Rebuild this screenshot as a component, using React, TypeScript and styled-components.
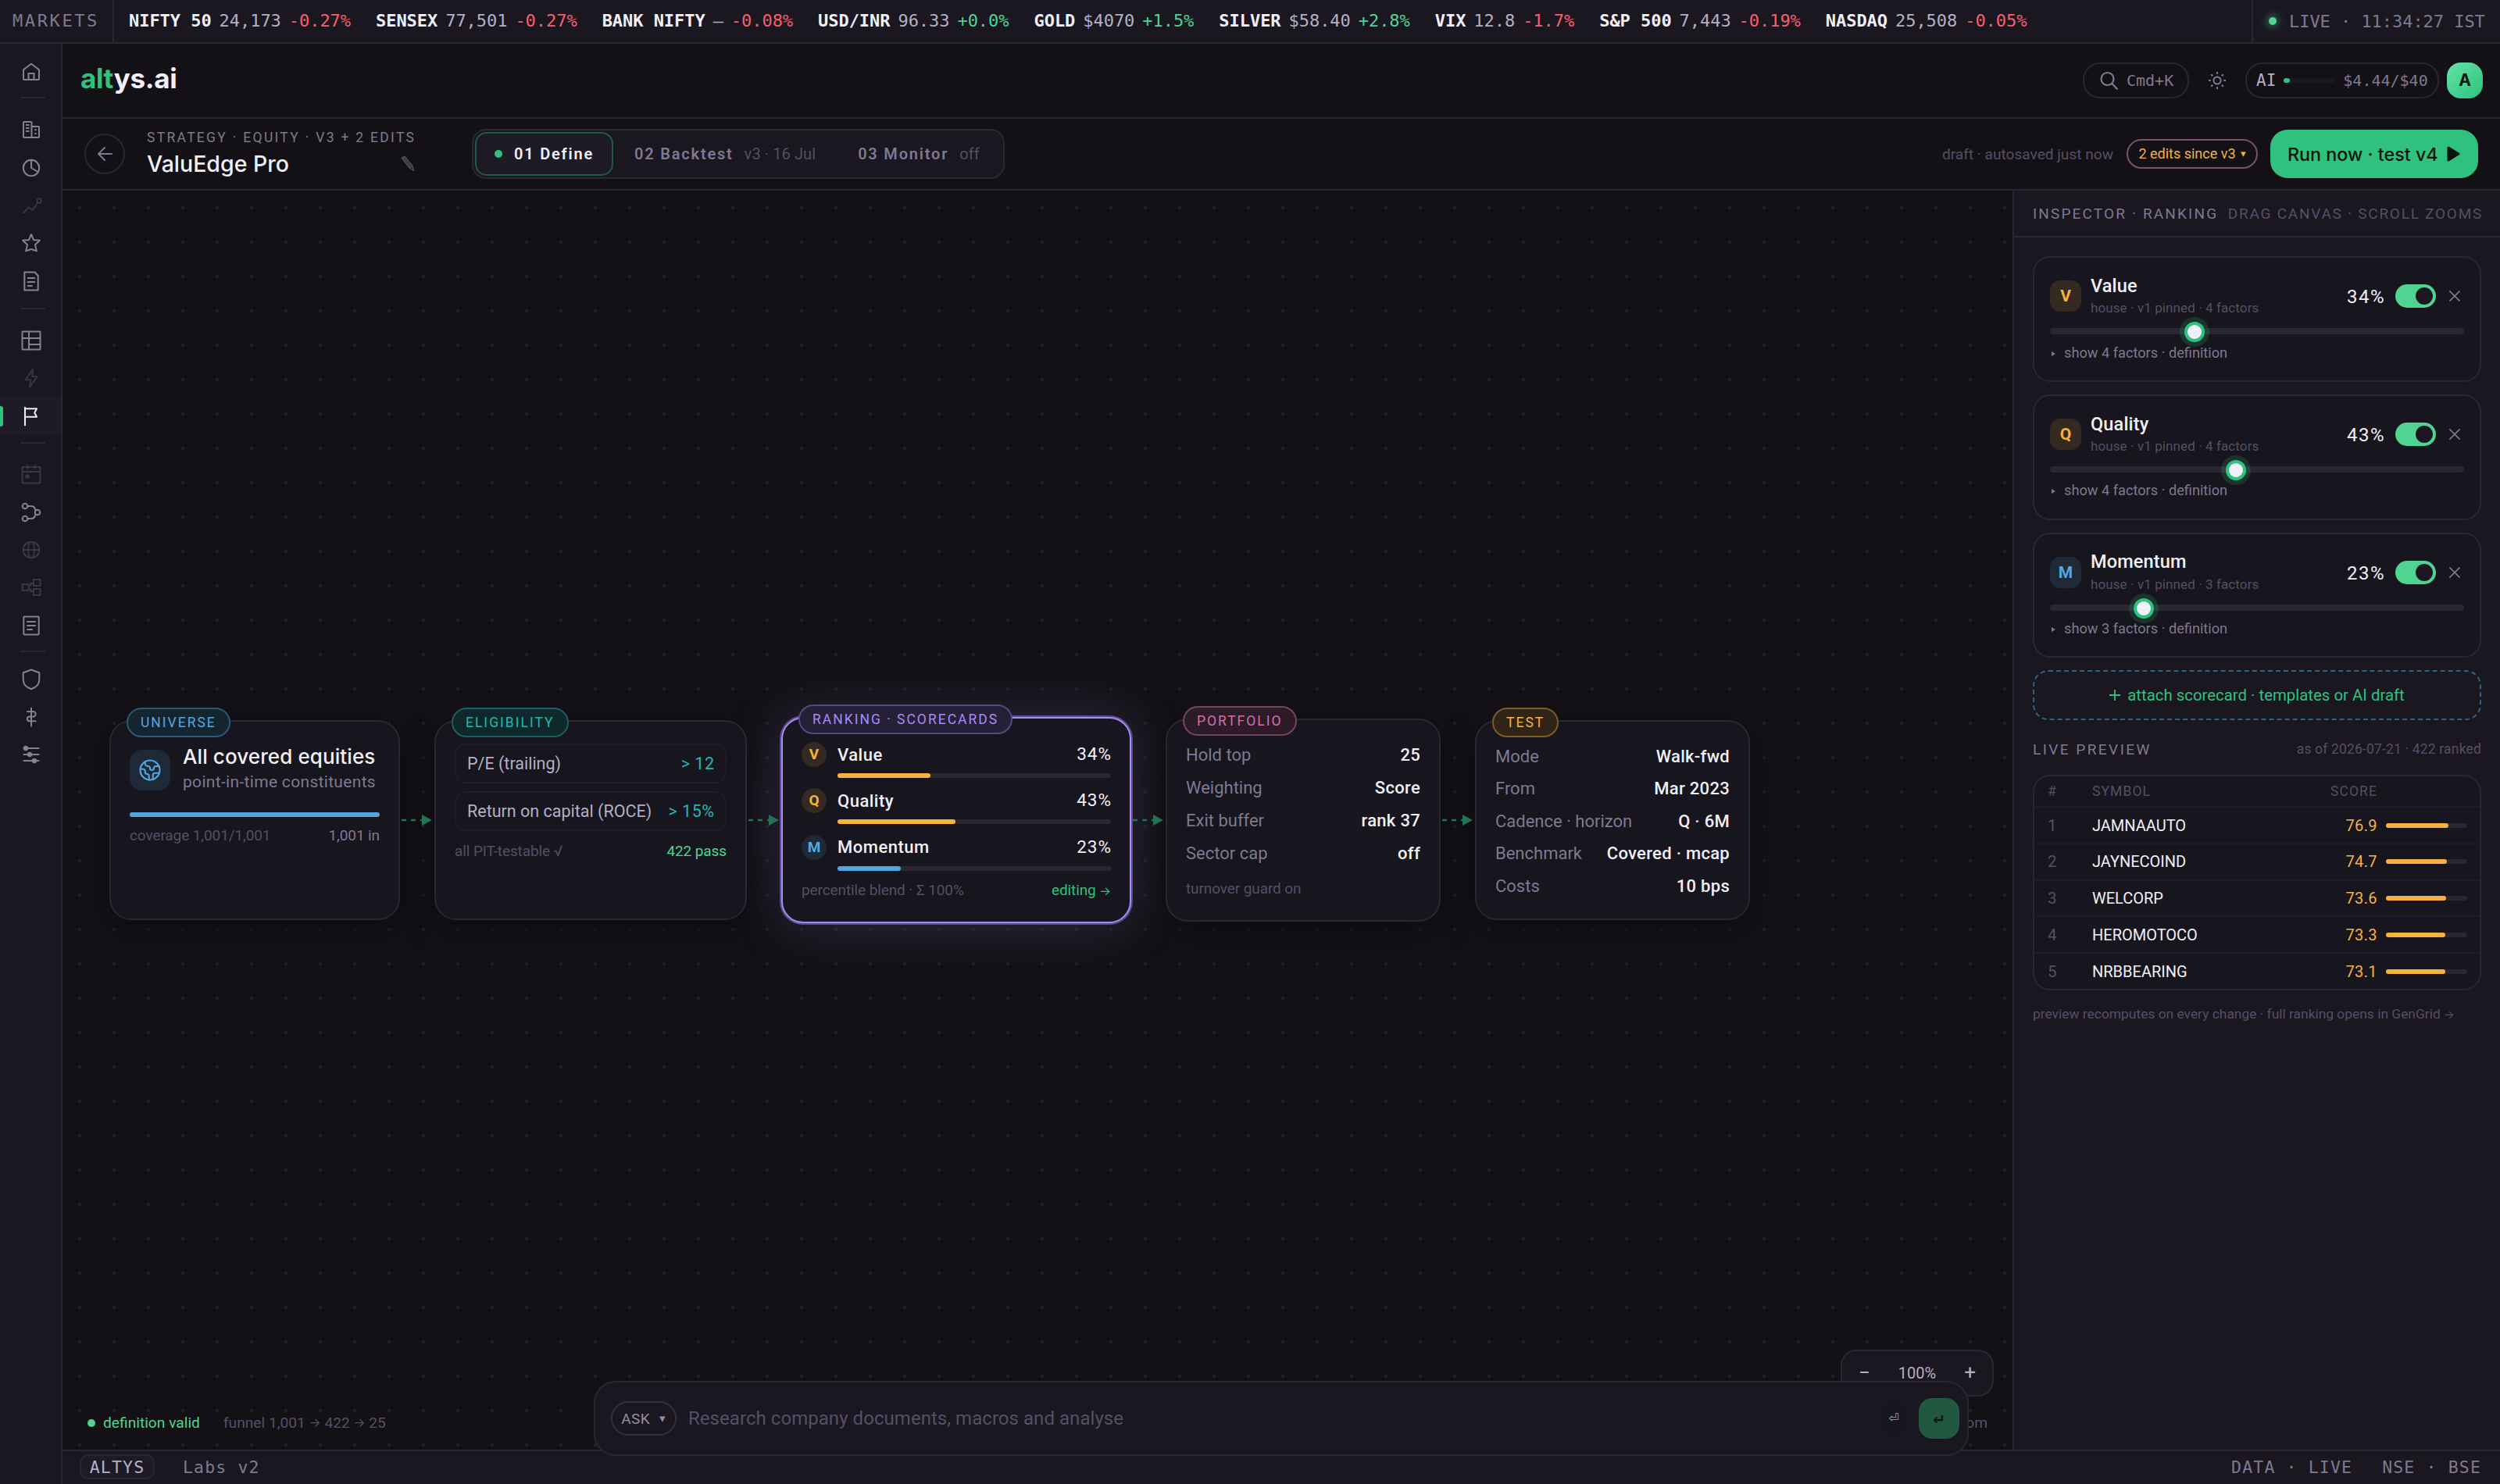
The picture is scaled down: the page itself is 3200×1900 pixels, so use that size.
import React from 'react';
import styled, { createGlobalStyle, css } from 'styled-components';
import { Earth } from 'lucide-react';

const c = {
  bg: '#131116',
  panel: '#1a1721',
  card: '#17151e',
  raised: '#1e1b27',
  line: '#2a2732',
  lineSoft: '#1f1c27',
  text: '#f1eff7',
  soft: '#b5afc5',
  muted: '#7f7991',
  dim: '#554f66',
  faint: '#393545',
  green: '#2fc27f',
  mint: '#4fd491',
  red: '#f95e6b',
  amber: '#f6b23f',
  blue: '#53a7df',
  teal: '#1fb9b1',
  violet: '#a78bfa',
};

const sans = `Roboto, 'Noto Sans', sans-serif`;
const mono = `'DejaVu Sans Mono', 'Liberation Mono', monospace`;
const display = `Inter, Roboto, sans-serif`;

const GlobalStyle = createGlobalStyle`
  * {
    box-sizing: border-box;
  }

  body {
    margin: 0;
    background: ${c.bg};
    color: ${c.text};
    font-family: ${sans};
    overflow: hidden;
  }
`;

const Shell = styled.div`
  width: 3200px;
  height: 1900px;
  display: flex;
  flex-direction: column;
  overflow: hidden;
`;

/* ---------- ticker ---------- */

const Ticker = styled.div`
  height: 56px;
  flex: none;
  display: flex;
  background: ${c.panel};
  border-bottom: 2px solid ${c.line};
  font-family: ${mono};
  font-size: 22px;
  line-height: 53px;
  white-space: pre;
`;

const TickerLabel = styled.div`
  width: 146px;
  padding-left: 16px;
  border-right: 2px solid ${c.line};
  color: ${c.muted};
  letter-spacing: 2.6px;
`;

const TickerList = styled.div`
  flex: 1;
  display: flex;
  gap: 32px;
  padding-left: 19px;
`;

const Quote = styled.div`
  display: flex;
  gap: 10px;
  letter-spacing: -0.045px;
`;

const QuoteName = styled.span`
  font-weight: 700;
  color: ${c.text};
`;

const QuoteValue = styled.span`
  color: ${c.soft};
`;

const QuoteChange = styled.span<{ $up: boolean }>`
  color: ${({ $up }) => ($up ? c.mint : c.red)};
`;

const Clock = styled.div`
  width: 318px;
  display: flex;
  align-items: center;
  gap: 16px;
  padding-left: 20px;
  border-left: 2px solid ${c.line};
  color: ${c.muted};
  letter-spacing: -0.045px;
`;

const Dot = styled.i<{ $color?: string; $glow?: boolean }>`
  width: 10px;
  height: 10px;
  flex: none;
  border-radius: 50%;
  background: ${({ $color }) => $color || c.green};
  ${({ $glow }) =>
    $glow &&
    css`
      box-shadow: 0 0 12px ${c.mint};
    `}
`;

/* ---------- sidebar ---------- */

const Body = styled.div`
  flex: 1;
  display: flex;
  min-height: 0;
`;

const Sidebar = styled.nav`
  width: 80px;
  flex: none;
  padding-top: 12px;
  display: flex;
  flex-direction: column;
  background: ${c.panel};
  border-right: 2px solid ${c.line};
`;

const NavItem = styled.div<{ $state?: 'active' | 'off' }>`
  height: 48.4px;
  display: flex;
  align-items: center;
  padding-left: 28px;
  color: ${({ $state }) => ($state === 'active' ? c.text : $state === 'off' ? c.faint : '#868097')};
  ${({ $state }) =>
    $state === 'active' &&
    css`
      background: ${c.raised};

      &::before {
        content: '';
        width: 4px;
        height: 26px;
        margin: 0 24px 0 -28px;
        border-radius: 0 3px 3px 0;
        background: ${c.green};
      }
    `}
`;

const NavRule = styled.hr<{ $before: number; $after: number }>`
  width: 32px;
  height: 2px;
  flex: none;
  border: 0;
  margin: ${({ $before, $after }) => `${$before}px 0 ${$after}px 26px`};
  background: ${c.line};
`;

const Glyph = styled.svg`
  width: 24px;
  height: 24px;
  overflow: visible;
  fill: none;
  stroke: currentColor;
  stroke-width: 2;
  stroke-linejoin: round;
  stroke-linecap: round;
`;

/* ---------- top bars ---------- */

const Main = styled.div`
  flex: 1;
  min-width: 0;
  display: flex;
  flex-direction: column;
`;

const TopBar = styled.header`
  height: 96px;
  flex: none;
  display: flex;
  align-items: center;
  padding: 0 22px 0 23px;
  border-bottom: 2px solid ${c.line};
`;

const Logo = styled.div`
  flex: 1;
  padding-bottom: 7px;
  font-family: ${display};
  font-size: 35px;
  font-weight: 700;
  letter-spacing: -0.35px;

  span {
    color: ${c.green};
  }
`;

const SearchPill = styled.div`
  width: 136px;
  height: 46px;
  display: flex;
  align-items: center;
  gap: 10px;
  padding-left: 20px;
  border: 2px solid ${c.line};
  border-radius: 22px;
  color: ${c.muted};
  font-family: ${mono};
  font-size: 20px;
`;

const ThemeButton = styled.div`
  width: 72px;
  display: flex;
  justify-content: center;
  color: ${c.muted};
`;

const BudgetPill = styled.div`
  width: 248px;
  height: 46px;
  display: flex;
  align-items: center;
  gap: 10px;
  padding-left: 12px;
  border: 2px solid ${c.line};
  border-radius: 22px;
  color: ${c.muted};
  font-family: ${mono};
  font-size: 20px;
`;

const BudgetName = styled.span`
  color: ${c.soft};
  font-size: 21px;
`;

const BudgetTrack = styled.div`
  width: 66px;
  height: 6px;
  border-radius: 3px;
  background: ${c.panel};
`;

const BudgetFill = styled.div`
  height: 6px;
  border-radius: 3px;
  background: ${c.green};
`;

const Avatar = styled.div`
  width: 46px;
  height: 46px;
  margin-left: 10px;
  border-radius: 18px;
  background: linear-gradient(135deg, #63e2a4, ${c.green});
  color: #07130d;
  font-family: ${display};
  font-size: 21px;
  font-weight: 700;
  line-height: 46px;
  text-align: center;
`;

const SubBar = styled.div`
  height: 92px;
  flex: none;
  display: flex;
  align-items: center;
  padding: 0 28px;
  border-bottom: 2px solid ${c.line};
`;

const BackButton = styled.div`
  width: 52px;
  height: 52px;
  display: flex;
  align-items: center;
  justify-content: center;
  border: 2px solid ${c.line};
  border-radius: 50%;
  color: ${c.muted};
`;

const Heading = styled.div`
  width: 345px;
  margin-left: 28px;
  padding-top: 2px;
`;

const Crumb = styled.div`
  color: ${c.muted};
  font-size: 17.5px;
  line-height: 22px;
  letter-spacing: 2.3px;
  white-space: nowrap;
`;

const TitleRow = styled.div`
  display: flex;
  justify-content: space-between;
  align-items: center;
  height: 44px;
  padding-right: 2px;
  font-family: ${display};
  font-size: 28.5px;
  font-weight: 500;
`;

const EditMark = styled.svg`
  width: 18px;
  height: 21px;
  fill: none;
  stroke: ${c.dim};
  stroke-width: 1.5;
  stroke-linejoin: round;
`;

const Tabs = styled.div`
  height: 64px;
  width: 682px;
  margin-left: 71px;
  display: flex;
  align-items: center;
  padding: 0 2px;
  border: 2px solid ${c.line};
  border-radius: 18px;
  background: ${c.panel};
`;

const Tab = styled.div<{ $active?: boolean }>`
  height: 56px;
  display: flex;
  align-items: center;
  padding: 0 ${({ $active }) => ($active ? 23 : 25)}px;
  border: 2px solid ${({ $active }) => ($active ? '#215a43' : 'transparent')};
  border-radius: 15px;
  background: ${({ $active }) => ($active ? c.raised : 'transparent')};
  color: ${({ $active }) => ($active ? c.text : c.muted)};
  font-size: 20px;
  font-weight: 600;
  letter-spacing: 1.8px;
  white-space: nowrap;

  ${Dot} {
    margin-right: 15px;
  }
`;

const TabNote = styled.span`
  margin-left: 14px;
  color: ${c.dim};
  font-weight: 400;
  letter-spacing: 0.1px;
`;

const Spacer = styled.div`
  flex: 1;
`;

const SaveState = styled.span`
  color: ${c.dim};
  font-size: 19.1px;
  white-space: nowrap;
`;

const EditsPill = styled.div`
  width: 168px;
  height: 38px;
  display: flex;
  justify-content: center;
  align-items: center;
  gap: 6px;
  margin: 0 16px 0 17px;
  border: 2px solid #80506a;
  border-radius: 19px;
  color: ${c.amber};
  font-size: 18px;
  line-height: 32px;
  white-space: nowrap;

  small {
    font-size: 13px;
  }
`;

const RunButton = styled.div`
  width: 266px;
  height: 62px;
  display: flex;
  align-items: center;
  gap: 11px;
  padding-left: 22px;
  border-radius: 22px;
  background: ${c.green};
  color: #06140d;
  font-family: ${display};
  font-size: 23.3px;
  font-weight: 500;
  white-space: nowrap;
`;

/* ---------- canvas ---------- */

const Workspace = styled.div`
  flex: 1;
  display: flex;
  min-height: 0;
`;

const Canvas = styled.div`
  position: relative;
  flex: 1;
  display: flex;
  align-items: center;
  padding-left: 60px;
  background-image: radial-gradient(circle, #211f28 2px, transparent 2.2px);
  background-size: 44px 44px;
`;

const Node = styled.section<{ $w: number; $h: number; $top: number; $active?: boolean }>`
  position: relative;
  width: ${({ $w }) => $w}px;
  height: ${({ $h }) => $h}px;
  flex: none;
  padding: ${({ $top }) => $top}px 24px 0;
  border: 2px solid ${({ $active }) => ($active ? c.violet : c.line)};
  border-radius: 28px;
  background: ${c.card};
  box-shadow: ${({ $active }) =>
    $active
      ? '0 0 0 2px rgba(167, 139, 250, 0.45), 0 0 72px rgba(167, 139, 250, 0.2)'
      : '0 12px 40px rgba(0, 0, 0, 0.35)'};
`;

const NodeTag = styled.span<{ $fg: string; $bg: string; $edge: string }>`
  position: absolute;
  top: -18px;
  left: 20px;
  height: 38px;
  padding: 0 16px;
  border: 2px solid ${({ $edge }) => $edge};
  border-radius: 19px;
  background: ${({ $bg }) => $bg};
  color: ${({ $fg }) => $fg};
  font-size: 17.5px;
  line-height: 35px;
  letter-spacing: 2px;
  white-space: nowrap;
`;

const UniverseHead = styled.div`
  display: flex;
  align-items: center;
  gap: 16px;
  height: 58px;
`;

const UniverseIcon = styled.div`
  width: 52px;
  height: 52px;
  display: flex;
  align-items: center;
  justify-content: center;
  border-radius: 16px;
  background: #1e2a37;
  color: ${c.blue};
`;

const UniverseText = styled.div`
  margin-top: -3px;
`;

const UniverseName = styled.div`
  font-family: ${display};
  font-size: 26px;
  font-weight: 500;
  line-height: 26px;
  letter-spacing: 0.1px;
  white-space: nowrap;
`;

const UniverseNote = styled.div`
  margin-top: 6px;
  color: ${c.muted};
  font-size: 21px;
  line-height: 26px;
  letter-spacing: 0.32px;
  white-space: nowrap;
`;

const FullBar = styled.div`
  height: 6px;
  margin-top: 25px;
  border-radius: 3px;
  background: ${c.blue};
`;

const NodeFoot = styled.div<{ $gap: number }>`
  display: flex;
  justify-content: space-between;
  margin-top: ${({ $gap }) => $gap}px;
  color: ${c.dim};
  font-size: 19px;
  line-height: 24px;
  letter-spacing: -0.1px;
  white-space: nowrap;
`;

const Accent = styled.span<{ $color: string }>`
  color: ${({ $color }) => $color};
`;

const Arrow = styled.span`
  font-family: ${display};
  font-size: 0.82em;
  line-height: 1;

  &::before {
    content: '→';
  }
`;

const Rule = styled.div`
  height: 51px;
  display: flex;
  justify-content: space-between;
  align-items: center;
  margin-bottom: 10px;
  padding: 0 14px;
  border: 2px solid ${c.lineSoft};
  border-radius: 14px;
  color: ${c.soft};
  font-size: 21.5px;
  white-space: nowrap;

  ${Accent} {
    letter-spacing: 0.5px;
    margin-right: -0.5px;
  }
`;

const ScoreBlock = styled.div`
  margin-bottom: 13.3px;
`;

const ScoreHead = styled.div`
  height: 32px;
  display: flex;
  align-items: center;
  gap: 14px;
`;

const Initial = styled.span<{ $tone: 'amber' | 'blue'; $size: number; $radius: number }>`
  width: ${({ $size }) => $size}px;
  height: ${({ $size }) => $size}px;
  flex: none;
  border-radius: ${({ $radius }) => $radius}px;
  background: ${({ $tone }) => ($tone === 'amber' ? '#352a22' : '#1e2a37')};
  color: ${({ $tone }) => ($tone === 'amber' ? c.amber : c.blue)};
  font-family: ${sans};
  font-size: ${({ $size }) => ($size > 32 ? 21 : 19)}px;
  font-weight: 700;
  line-height: ${({ $size }) => $size}px;
  text-align: center;
`;

const ScoreName = styled.span`
  flex: 1;
  font-size: 22px;
  font-weight: 500;
  letter-spacing: 0.5px;
`;

const ScorePct = styled.span`
  font-size: 22.5px;
  letter-spacing: 1px;
  margin: -2px -1px 0 0;
`;

const Meter = styled.div<{ $indent?: number }>`
  height: 6px;
  margin-left: ${({ $indent = 0 }) => $indent}px;
  border-radius: 3px;
  background: ${c.line};
`;

const MeterFill = styled.div<{ $color: string }>`
  height: 6px;
  border-radius: 3px;
  background: ${({ $color }) => $color};
`;

const Setting = styled.div<{ $h: number }>`
  height: ${({ $h }) => $h}px;
  line-height: ${({ $h }) => $h}px;
  display: flex;
  justify-content: space-between;
  color: ${c.muted};
  font-size: 22px;
  white-space: nowrap;

  b {
    color: ${c.text};
    font-weight: 500;
    letter-spacing: 0.3px;
  }
`;

const Link = styled.svg`
  position: relative;
  z-index: 1;
  width: 44px;
  height: 16px;
  flex: none;
`;

const CanvasStatus = styled.div`
  position: absolute;
  left: 32px;
  bottom: 21px;
  display: flex;
  align-items: center;
  color: ${c.dim};
  font-size: 19.2px;
  line-height: 26px;
  white-space: pre;

  ${Dot} {
    margin-right: 10px;
  }

  ${Accent} {
    margin-right: 30px;
  }
`;

const ZoomHint = styled.div`
  position: absolute;
  right: 32px;
  bottom: 21px;
  color: ${c.dim};
  font-size: 19.2px;
  line-height: 26px;
`;

const ZoomControl = styled.div`
  position: absolute;
  right: 24px;
  bottom: 68px;
  width: 196px;
  height: 60px;
  display: flex;
  align-items: center;
  justify-content: space-between;
  padding: 0 21px;
  border: 2px solid ${c.line};
  border-radius: 20px;
  background: ${c.panel};
  color: ${c.soft};
  font-size: 20px;
`;

const ZoomKey = styled.span`
  padding-bottom: 3px;
  font-size: 26px;
  line-height: 28px;
`;

/* ---------- inspector ---------- */

const Inspector = styled.aside`
  width: 624px;
  flex: none;
  background: ${c.panel};
  border-left: 2px solid ${c.line};
`;

const InspectorHead = styled.div`
  height: 60px;
  display: flex;
  justify-content: space-between;
  padding: 0 22px 0 24px;
  border-bottom: 2px solid ${c.line};
  color: ${c.muted};
  font-size: 19px;
  line-height: 59px;
  letter-spacing: 2.15px;
  white-space: nowrap;

  span + span {
    color: ${c.dim};
    letter-spacing: 1.75px;
  }
`;

const InspectorBody = styled.div`
  padding: 24px;
`;

const FactorCard = styled.div`
  height: 160.8px;
  margin-bottom: 16px;
  padding: 21.5px 20px 0;
  border: 2px solid ${c.line};
  border-radius: 22px;
  background: ${c.card};
`;

const FactorHead = styled.div`
  display: flex;
  align-items: center;
  height: 55px;
`;

const FactorTitle = styled.div`
  flex: 1;
  margin-left: 12px;
`;

const FactorName = styled.div`
  font-size: 23.5px;
  font-weight: 500;
  line-height: 28px;
  letter-spacing: 0.15px;
`;

const FactorMeta = styled.div`
  margin-top: 2.5px;
  color: ${c.dim};
  font-size: 17px;
  line-height: 24px;
  letter-spacing: 0.1px;
  white-space: nowrap;
`;

const FactorPct = styled.span`
  padding-top: 2px;
  font-size: 24px;
  letter-spacing: 1.5px;
`;

const Toggle = styled.span`
  width: 52px;
  height: 30px;
  display: flex;
  justify-content: flex-end;
  padding: 4px;
  margin: 0 17px 0 13px;
  border-radius: 15px;
  background: ${c.mint};

  &::after {
    content: '';
    width: 22px;
    height: 22px;
    border-radius: 50%;
    background: ${c.panel};
  }
`;

const Remove = styled.svg`
  width: 14px;
  height: 14px;
  margin-right: 5px;
  stroke: ${c.muted};
  stroke-width: 1.6;
`;

const Slider = styled.div`
  position: relative;
  height: 8px;
  margin-top: 13.5px;
  padding: 0 13px;
  border-radius: 4px;
  background: ${c.line};
`;

const SliderRange = styled.div`
  position: relative;
`;

const Thumb = styled.i`
  position: absolute;
  top: -8px;
  width: 26px;
  height: 26px;
  margin-left: -13px;
  border: 4px solid ${c.green};
  border-radius: 50%;
  background: ${c.text};
  box-shadow: 0 0 0 6px rgba(47, 194, 127, 0.18);
`;

const Disclosure = styled.div`
  display: flex;
  align-items: center;
  margin-top: 11.5px;
  color: ${c.muted};
  font-size: 18.2px;
  line-height: 24px;
  white-space: nowrap;

  &::before {
    content: '';
    margin: 2px 11px 0 2px;
    border-left: 5px solid ${c.muted};
    border-top: 3px solid transparent;
    border-bottom: 3px solid transparent;
  }
`;

const Attach = styled.div`
  height: 64px;
  display: flex;
  justify-content: center;
  align-items: center;
  gap: 9px;
  border: 2px dashed #2a628c;
  border-radius: 20px;
  color: ${c.green};
  font-size: 20.4px;
  white-space: nowrap;
`;

const PlusMark = styled.svg`
  width: 14px;
  height: 14px;
  stroke: currentColor;
  stroke-width: 1.8;
`;

const PreviewHead = styled.div`
  display: flex;
  justify-content: space-between;
  margin: 25px 0 20px;
  color: ${c.muted};
  font-size: 19px;
  line-height: 25px;
  letter-spacing: 2.45px;

  small {
    color: ${c.dim};
    font-size: 17.5px;
    letter-spacing: 0.17px;
  }
`;

const Table = styled.div`
  height: 276px;
  border: 2px solid ${c.line};
  border-radius: 22px;
  background: ${c.card};
  overflow: hidden;
`;

const TableRow = styled.div<{ $head?: boolean }>`
  height: ${({ $head }) => ($head ? 40 : 46.7)}px;
  display: grid;
  grid-template-columns: 57px 1fr auto 104px;
  align-items: center;
  padding: 0 16px 0 17px;
  border-bottom: 2px solid ${c.lineSoft};
  color: ${c.dim};
  font-size: ${({ $head }) => ($head ? 17.5 : 20.5)}px;
  letter-spacing: ${({ $head }) => ($head ? 1.1 : 0.1)}px;

  &:last-child {
    border-bottom: 0;
  }
`;

const Symbol = styled.span`
  color: ${c.text};
  font-size: 20px;
  letter-spacing: 0;
`;

const Score = styled.span`
  margin-right: 11px;
  color: ${c.amber};
  font-size: 20px;
  letter-spacing: 0.4px;
`;

const ScoreHeading = styled.span`
  margin-right: 11px;
`;

const TableNote = styled.div`
  margin-top: 18px;
  color: ${c.dim};
  font-size: 17.4px;
  line-height: 24px;
  white-space: nowrap;
`;

/* ---------- ask bar + footer ---------- */

const Footer = styled.footer`
  position: relative;
  height: 44px;
  flex: none;
  display: flex;
  align-items: center;
  padding: 0 24px 1px 22px;
  border-top: 2px solid ${c.line};
  background: ${c.panel};
  color: ${c.muted};
  font-family: ${mono};
  font-size: 21.5px;
  letter-spacing: 1.15px;
  white-space: pre;
`;

const Brand = styled.span`
  width: 96px;
  height: 32px;
  margin: -2px 36px 0 0;
  border: 2px solid ${c.line};
  border-radius: 11px;
  background: ${c.raised};
  color: ${c.soft};
  line-height: 29px;
  text-align: center;
`;

const FeedNote = styled.span`
  margin-left: 38px;
`;

const AskBar = styled.div`
  position: absolute;
  left: 680px;
  bottom: 36px;
  width: 1760px;
  height: 96px;
  display: flex;
  align-items: center;
  padding: 0 10px 0 20px;
  border: 2px solid ${c.line};
  border-radius: 28px;
  background: ${c.panel};
  font-family: ${sans};
  letter-spacing: 0;
`;

const AskMode = styled.div`
  width: 84px;
  height: 44px;
  display: flex;
  align-items: center;
  justify-content: center;
  gap: 7px;
  border: 2px solid #34303e;
  border-radius: 22px;
  color: #938da5;
  font-size: 19px;
  letter-spacing: 0.4px;

  small {
    font-size: 15px;
  }
`;

const AskInput = styled.div`
  flex: 1;
  margin-left: 15px;
  color: ${c.dim};
  font-size: 24px;
  letter-spacing: 0.05px;
`;

const NewLine = styled.span`
  width: 32px;
  height: 40px;
  margin-right: 16px;
  border-radius: 16px;
  background: ${c.card};
  color: #a39db4;
  font-family: 'DejaVu Sans', sans-serif;
  font-size: 16px;
  line-height: 39px;
  text-align: center;
`;

const Send = styled.span`
  width: 52px;
  height: 52px;
  border-radius: 17px;
  background: #205842;
  color: #0b120f;
  font-family: 'DejaVu Sans', sans-serif;
  font-size: 19px;
  font-weight: 700;
  line-height: 54px;
  text-align: center;
`;

const quotes = [
  ['NIFTY 50', '24,173', '-0.27%'],
  ['SENSEX', '77,501', '-0.27%'],
  ['BANK NIFTY', '—', '-0.08%'],
  ['USD/INR', '96.33', '+0.0%'],
  ['GOLD', '$4070', '+1.5%'],
  ['SILVER', '$58.40', '+2.8%'],
  ['VIX', '12.8', '-1.7%'],
  ['S&P 500', '7,443', '-0.19%'],
  ['NASDAQ', '25,508', '-0.05%'],
];

type Factor = { name: string; weight: number; factors: number; tone: 'amber' | 'blue' };

const factors: Factor[] = [
  { name: 'Value', weight: 34, factors: 4, tone: 'amber' },
  { name: 'Quality', weight: 43, factors: 4, tone: 'amber' },
  { name: 'Momentum', weight: 23, factors: 3, tone: 'blue' },
];

const MIN_WEIGHT = 5;
const MAX_WEIGHT = 90;
const thumbLeft = (weight: number) => `${((weight - MIN_WEIGHT) / (MAX_WEIGHT - MIN_WEIGHT)) * 100}%`;

const ranked: [string, number][] = [
  ['JAMNAAUTO', 76.9],
  ['JAYNECOIND', 74.7],
  ['WELCORP', 73.6],
  ['HEROMOTOCO', 73.3],
  ['NRBBEARING', 73.1],
];

const icons: Record<string, React.ReactNode> = {
  home: <path d="M2 9.2 12 1.8l10 7.4v11.3a1.5 1.5 0 0 1-1.5 1.5h-17A1.5 1.5 0 0 1 2 20.5ZM8.5 22v-8h7v8" />,
  company: (
    <>
      <rect x="2" y="2" width="10.5" height="20" rx="1" />
      <path d="M12.5 8H21a1 1 0 0 1 1 1v12a1 1 0 0 1-1 1h-8.5" />
      <path d="M5.8 6h3M5.800 10h3M5.800 14h3M17 12.3h1M17 17h1" />
    </>
  ),
  pie: (
    <>
      <circle cx="12" cy="12" r="10.2" />
      <path d="M12 2v10l8.5 5" />
    </>
  ),
  trend: (
    <>
      <path d="m2.3 21.5 6-7 5.5 3.5 6.5-9.5" />
      <circle cx="22" cy="6" r="2.7" />
    </>
  ),
  star: <path d="m12 1 3 7.2 8 .6-6 5.4 1.800 8.2L12 20l-6.800 2.400L7 14.200 1 8.800l8-.6Z" />,
  report: (
    <>
      <path d="M3.3.5H16.5L20.7 5v18.500H3.3Z" />
      <path d="M7.800 8h8.400M7.800 13h8.400M7.800 18h5" />
    </>
  ),
  table: (
    <>
      <rect x="0.5" y="0.5" width="23" height="23" rx="1" />
      <path d="M.5 9h23M9 .5v23M9 17h14.5" />
    </>
  ),
  bolt: <path d="M14 .7 4.7 14.3h6.6L10 23.7 19.7 10h-6.4Z" />,
  flag: <path d="M4 .7v22.8M4 2.3h15l-2.8 5.2 2.8 5.200H4" />,
  calendar: (
    <>
      <rect x="0.5" y="3" width="23" height="20.5" rx="1" />
      <path d="M.5 9h23M7 .8V5M17 .8V5" />
      <circle cx="7" cy="15" r="1.8" fill="currentColor" />
    </>
  ),
  flow: (
    <>
      <circle cx="4" cy="4" r="3.3" />
      <circle cx="4" cy="20" r="3.3" />
      <circle cx="20" cy="12" r="3.3" />
      <path d="M7.5 4H12q4.500 0 5.300 5.500M7.500 20H12q4.500 0 5.300-5.500" />
    </>
  ),
  globe: (
    <>
      <circle cx="12" cy="12" r="10.3" />
      <ellipse cx="12" cy="12" rx="4" ry="10.3" />
      <path d="M2 12h20" />
    </>
  ),
  tree: (
    <>
      <rect x="0.7" y="8" width="8" height="8" />
      <rect x="15" y="2" width="8.5" height="8" />
      <rect x="15" y="14" width="8.5" height="8" />
      <path d="M8.700 11 11.500 8.500V7H15M8.700 13l2.800 2.500V17H15" />
    </>
  ),
  notes: (
    <>
      <rect x="2.3" y="0.5" width="19.4" height="23" rx="1" />
      <path d="M7 7h10M7 12h10M7 17h6" />
    </>
  ),
  shield: <path d="M12-.5 22.300 3.200V12c0 6-4.300 10.200-10.300 12.200C6 22.200 1.700 18 1.700 12V3.200Z" />,
  dollar: <path d="M12 .5v23M7 5h7.500a3.200 3.200 0 0 1 0 6.400H9.800a2.900 2.900 0 0 0 0 5.800H17.500" />,
  sliders: (
    <>
      <path d="M2.500 4h19M2.500 12h19M2.500 20h19" />
      <g fill="currentColor">
        <circle cx="5" cy="4" r="2.2" />
        <circle cx="10" cy="12" r="2.2" />
        <circle cx="16" cy="20" r="2.2" />
      </g>
    </>
  ),
};

const Nav = ({ name, state }: { name: string; state?: 'active' | 'off' }) => (
  <NavItem $state={state}>
    <Glyph viewBox="0 0 24 24">{icons[name]}</Glyph>
  </NavItem>
);

const Connector = () => (
  <Link viewBox="0 0 44 16">
    <path d="M2 8H28" stroke="#237251" strokeWidth="2.5" strokeDasharray="6 6" fill="none" />
    <path d="M28 1 41 8 28 15Z" fill="#237251" />
  </Link>
);

const App = () => {
  return (
    <Shell>
      <GlobalStyle />
      <Ticker>
        <TickerLabel>MARKETS</TickerLabel>
        <TickerList>
          {quotes.map(([name, value, change]) => (
            <Quote key={name}>
              <QuoteName>{name}</QuoteName>
              <QuoteValue>{value}</QuoteValue>
              <QuoteChange $up={change.startsWith('+')}>{change}</QuoteChange>
            </Quote>
          ))}
        </TickerList>
        <Clock>
          <Dot $color={c.mint} $glow />
          LIVE · 11:34:27 IST
        </Clock>
      </Ticker>

      <Body>
        <Sidebar>
          <Nav name="home" />
          <NavRule $before={7.6} $after={16} />
          <Nav name="company" />
          <Nav name="pie" />
          <Nav name="trend" state="off" />
          <Nav name="star" />
          <Nav name="report" />
          <NavRule $before={9.6} $after={16} />
          <Nav name="table" />
          <Nav name="bolt" state="off" />
          <Nav name="flag" state="active" />
          <NavRule $before={9.4} $after={15} />
          <Nav name="calendar" state="off" />
          <Nav name="flow" />
          <Nav name="globe" state="off" />
          <Nav name="tree" state="off" />
          <Nav name="notes" />
          <NavRule $before={8.4} $after={10} />
          <Nav name="shield" />
          <Nav name="dollar" />
          <Nav name="sliders" />
        </Sidebar>

        <Main>
          <TopBar>
            <Logo>
              <span>alt</span>ys.ai
            </Logo>
            <SearchPill>
              <svg width="24" height="24" viewBox="0 0 24 24" fill="none" stroke="currentColor" strokeWidth="2.2">
                <circle cx="9.5" cy="10" r="8" />
                <path d="m15.3 16 7.2 7.5" />
              </svg>
              Cmd+K
            </SearchPill>
            <ThemeButton>
              <svg width="24" height="24" viewBox="0 0 24 24" fill="none" stroke="currentColor" strokeWidth="2">
                <circle cx="12" cy="12" r="4.6" />
                <path d="M12 1v2.800M12 20.200V23M1 12h2.800M20.200 12H23M4.200 4.200l2 2M17.800 17.800l2 2M4.200 19.800l2-2M17.800 6.200l2-2" />
              </svg>
            </ThemeButton>
            <BudgetPill>
              <BudgetName>AI</BudgetName>
              <BudgetTrack>
                <BudgetFill style={{ width: `${(4.44 / 40) * 100}%` }} />
              </BudgetTrack>
              $4.44/$40
            </BudgetPill>
            <Avatar>A</Avatar>
          </TopBar>

          <SubBar>
            <BackButton>
              <Glyph viewBox="0 0 24 24">
                <path d="M21 12H4M12 4l-8 8 8 8" />
              </Glyph>
            </BackButton>
            <Heading>
              <Crumb>STRATEGY · EQUITY · V3 + 2 EDITS</Crumb>
              <TitleRow>
                ValuEdge Pro
                <EditMark viewBox="0 0 18 21">
                  <path d="M1.500 3.500 5 1.200 14.800 13.500 16.500 19.500 11.300 16Z" />
                  <path d="m14.800 13.500-3.500 2.500M3.300 2.400l9.700 12.300" />
                </EditMark>
              </TitleRow>
            </Heading>
            <Tabs>
              <Tab $active>
                <Dot />
                01 Define
              </Tab>
              <Tab>
                02 Backtest<TabNote>v3 · 16 Jul</TabNote>
              </Tab>
              <Tab>
                03 Monitor<TabNote>off</TabNote>
              </Tab>
            </Tabs>
            <Spacer />
            <SaveState>draft · autosaved just now</SaveState>
            <EditsPill>
              2 edits since v3 <small>▾</small>
            </EditsPill>
            <RunButton>
              Run now · test v4
              <svg width="17" height="20" viewBox="0 0 17 20">
                <path d="M2 2v16L15 10Z" fill="#06140d" stroke="#06140d" strokeWidth="3" strokeLinejoin="round" />
              </svg>
            </RunButton>
          </SubBar>

          <Workspace>
            <Canvas>
              <Node $w={372} $h={256} $top={33}>
                <NodeTag $fg={c.blue} $bg="#15252f" $edge="#2c587a">UNIVERSE</NodeTag>
                <UniverseHead>
                  <UniverseIcon>
                    <Earth size={30} strokeWidth={1.7} />
                  </UniverseIcon>
                  <UniverseText>
                    <UniverseName>All covered equities</UniverseName>
                    <UniverseNote>point-in-time constituents</UniverseNote>
                  </UniverseText>
                </UniverseHead>
                <FullBar />
                <NodeFoot $gap={11.5}>
                  <span>coverage 1,001/1,001</span>
                  <Accent $color={c.muted}>1,001 in</Accent>
                </NodeFoot>
              </Node>
              <Connector />
              <Node $w={400} $h={256} $top={28}>
                <NodeTag $fg={c.teal} $bg="#11282b" $edge="#1c5f62">ELIGIBILITY</NodeTag>
                <Rule>
                  P/E (trailing) <Accent $color={c.teal}>&gt; 12</Accent>
                </Rule>
                <Rule>
                  Return on capital (ROCE) <Accent $color={c.teal}>&gt; 15%</Accent>
                </Rule>
                <NodeFoot $gap={13.5}>
                  <span>all PIT-testable √</span>
                  <Accent $color={c.mint}>422 pass</Accent>
                </NodeFoot>
              </Node>
              <Connector />
              <Node $w={448} $h={264} $top={30} $active>
                <NodeTag $fg={c.violet} $bg="#252036" $edge="#574882">RANKING · SCORECARDS</NodeTag>
                {factors.map(({ name, weight, tone }) => (
                  <ScoreBlock key={name}>
                    <ScoreHead>
                      <Initial $tone={tone} $size={32} $radius={16}>
                        {name[0]}
                      </Initial>
                      <ScoreName>{name}</ScoreName>
                      <ScorePct>{weight}%</ScorePct>
                    </ScoreHead>
                    <Meter $indent={46} style={{ marginTop: 8 }}>
                      <MeterFill $color={c[tone]} style={{ width: `${weight}%` }} />
                    </Meter>
                  </ScoreBlock>
                ))}
                <NodeFoot $gap={4}>
                  <span>percentile blend · Σ 100%</span>
                  <Accent $color={c.green}>
                    editing <Arrow />
                  </Accent>
                </NodeFoot>
              </Node>
              <Connector />
              <Node $w={352} $h={260} $top={24}>
                <NodeTag $fg="#d26fae" $bg="#2d1c28" $edge="#744464">PORTFOLIO</NodeTag>
                <Setting $h={42}>Hold top <b>25</b></Setting>
                <Setting $h={42}>Weighting <b>Score</b></Setting>
                <Setting $h={42}>Exit buffer <b>rank 37</b></Setting>
                <Setting $h={42}>Sector cap <b>off</b></Setting>
                <NodeFoot $gap={11.5}>turnover guard on</NodeFoot>
              </Node>
              <Connector />
              <Node $w={352} $h={256} $top={23.7}>
                <NodeTag $fg={c.amber} $bg="#2f2415" $edge="#7d5c26">TEST</NodeTag>
                <Setting $h={41.5}>Mode <b>Walk-fwd</b></Setting>
                <Setting $h={41.5}>From <b>Mar 2023</b></Setting>
                <Setting $h={41.5}>Cadence · horizon <b>Q · 6M</b></Setting>
                <Setting $h={41.5}>Benchmark <b>Covered · mcap</b></Setting>
                <Setting $h={41.5}>Costs <b>10 bps</b></Setting>
              </Node>

              <CanvasStatus>
                <Dot $color={c.mint} />
                <Accent $color={c.mint}>definition valid</Accent>
                funnel 1,001 <Arrow /> 422 <Arrow /> 25
              </CanvasStatus>
              <ZoomControl>
                <ZoomKey>−</ZoomKey>
                100%
                <ZoomKey>+</ZoomKey>
              </ZoomControl>
              <ZoomHint>zoom</ZoomHint>
            </Canvas>

            <Inspector>
              <InspectorHead>
                <span>INSPECTOR · RANKING</span>
                <span>DRAG CANVAS · SCROLL ZOOMS</span>
              </InspectorHead>
              <InspectorBody>
                {factors.map(({ name, weight, factors: count, tone }) => (
                  <FactorCard key={name}>
                    <FactorHead>
                      <Initial $tone={tone} $size={40} $radius={13}>
                        {name[0]}
                      </Initial>
                      <FactorTitle>
                        <FactorName>{name}</FactorName>
                        <FactorMeta>house · v1 pinned · {count} factors</FactorMeta>
                      </FactorTitle>
                      <FactorPct>{weight}%</FactorPct>
                      <Toggle />
                      <Remove viewBox="0 0 14 14">
                        <path d="m.5.5 13 13M13.5.5l-13 13" />
                      </Remove>
                    </FactorHead>
                    <Slider>
                      <SliderRange>
                        <Thumb style={{ left: thumbLeft(weight) }} />
                      </SliderRange>
                    </Slider>
                    <Disclosure>show {count} factors · definition</Disclosure>
                  </FactorCard>
                ))}
                <Attach>
                  <PlusMark viewBox="0 0 14 14">
                    <path d="M7 0v14M0 7h14" />
                  </PlusMark>
                  attach scorecard · templates or AI draft
                </Attach>
                <PreviewHead>
                  LIVE PREVIEW
                  <small>as of 2026-07-21 · 422 ranked</small>
                </PreviewHead>
                <Table>
                  <TableRow $head>
                    <span>#</span>
                    <span>SYMBOL</span>
                    <ScoreHeading>SCORE</ScoreHeading>
                  </TableRow>
                  {ranked.map(([symbol, score], i) => (
                    <TableRow key={symbol}>
                      <span>{i + 1}</span>
                      <Symbol>{symbol}</Symbol>
                      <Score>{score}</Score>
                      <Meter>
                        <MeterFill $color={c.amber} style={{ width: `${score}%` }} />
                      </Meter>
                    </TableRow>
                  ))}
                </Table>
                <TableNote>
                  preview recomputes on every change · full ranking opens in GenGrid <Arrow />
                </TableNote>
              </InspectorBody>
            </Inspector>
          </Workspace>

          <Footer>
            <Brand>ALTYS</Brand>
            Labs v2
            <Spacer />
            DATA · LIVE
            <FeedNote>NSE · BSE</FeedNote>
            <AskBar>
              <AskMode>
                ASK <small>▾</small>
              </AskMode>
              <AskInput>Research company documents, macros and analyse</AskInput>
              <NewLine>⏎</NewLine>
              <Send>↵</Send>
            </AskBar>
          </Footer>
        </Main>
      </Body>
    </Shell>
  );
};

export default App;
